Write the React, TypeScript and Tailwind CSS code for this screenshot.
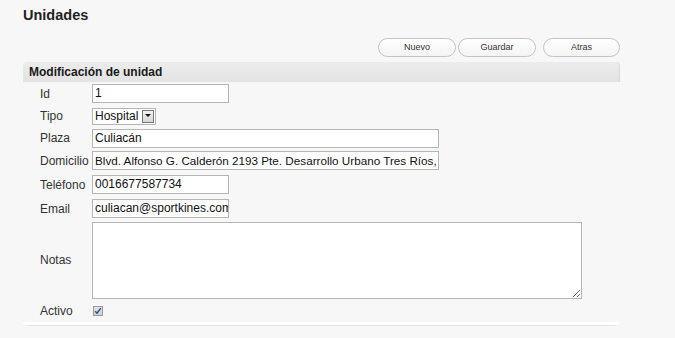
import React from "react";

const font = { fontFamily: '"Liberation Sans", Arial, sans-serif' };

function Row({ label, h, children }: { label: string; h: string; children: React.ReactNode }) {
  return (
    <div className={`flex items-center ${h}`}>
      <div className="w-[69px] shrink-0 pl-[17px] text-[12px] text-[#333] whitespace-nowrap">{label}</div>
      <div className="flex items-center">{children}</div>
    </div>
  );
}

function Input({ value, w, size = "text-[12px]" }: { value: string; w: string; size?: string }) {
  return (
    <div
      className={`${w} ${size} h-[19px] bg-white border border-[#b5b5b5] text-[#111] leading-[17px] pl-[2px] overflow-hidden whitespace-nowrap`}
    >
      {value}
    </div>
  );
}

export default function App() {
  return (
    <div className="min-h-[338px] w-[675px] bg-[#f7f7f7] overflow-hidden" style={font}>
      <div className="pl-[23px] pt-[6px]">
        <h1 className="text-[14.5px] font-bold text-[#222] leading-[18px]">Unidades</h1>
      </div>
      <div className="w-[597px] ml-[23px]">
        <div className="flex justify-end h-[19px] mt-[14px]">
          {[
            { t: "Nuevo", c: "w-[78px]" },
            { t: "Guardar", c: "w-[78px] ml-[2px]" },
            { t: "Atras", c: "w-[77px] ml-[7px]" },
          ].map((b) => (
            <div
              key={b.t}
              className={`${b.c} h-[19px] rounded-full border border-[#c4c4c4] bg-gradient-to-b from-white to-[#f4f4f4] flex items-center justify-center text-[9px] text-[#333]`}
            >
              {b.t}
            </div>
          ))}
        </div>
        <div className="mt-[5px] h-[20px] rounded-t-[4px] bg-gradient-to-b from-[#ececec] to-[#e3e3e3] border-r border-[#d8d8d8] flex items-center pl-[6px]">
          <span className="text-[12px] font-bold text-[#1a1a1a]">Modificación de unidad</span>
        </div>
        <div className="rounded-b-[6px] border-b border-[#e4e4e4]">
          <div>
            <Row label="Id" h="h-[23px]">
              <Input value="1" w="w-[137px]" />
            </Row>
            <Row label="Tipo" h="h-[22px]">
              <div className="h-[17px] w-[64px] bg-white border border-[#b5b5b5] flex items-center text-[12px] text-[#111] pl-[2px]">
                <span className="flex-1 leading-[15px]">Hospital</span>
                <span className="w-[12px] h-[13px] mr-[1px] border border-[#777] bg-gradient-to-b from-[#f2f2f2] to-[#d6d6d6] flex items-center justify-center">
                  <svg width="6" height="4" viewBox="0 0 6 4">
                    <path d="M0 0 L6 0 L3 3 Z" fill="#111" />
                  </svg>
                </span>
              </div>
            </Row>
            <Row label="Plaza" h="h-[22px]">
              <Input value="Culiacán" w="w-[347px]" />
            </Row>
            <Row label="Domicilio" h="h-[23px]">
              <Input
                value="Blvd. Alfonso G. Calderón 2193 Pte. Desarrollo Urbano Tres Ríos,"
                w="w-[347px]"
                size="text-[11.7px]"
              />
            </Row>
            <Row label="Teléfono" h="h-[25px]">
              <Input value="0016677587734" w="w-[137px]" />
            </Row>
            <Row label="Email" h="h-[23px]">
              <Input value="culiacan@sportkines.com" w="w-[137px]" />
            </Row>
            <Row label="Notas" h="h-[80px]">
              <textarea
                readOnly
                className="block w-[490px] h-[77px] bg-white border border-[#b5b5b5] outline-none"
              />
            </Row>
            <Row label="Activo" h="h-[22px]">
              <span className="ml-[1px] w-[10px] h-[10px] border border-[#9a9a9a] bg-gradient-to-b from-[#e4e4e4] to-[#cfcfcf] flex items-center justify-center">
                <svg width="8" height="8" viewBox="0 0 8 8">
                  <path d="M1.2 4.2 L3 6.2 L6.8 1.2" stroke="#1f4c9a" strokeWidth="1.4" fill="none" />
                </svg>
              </span>
            </Row>
          </div>
          <div className="h-[3px] bg-white rounded-b-[6px]" />
        </div>
      </div>
    </div>
  );
}
